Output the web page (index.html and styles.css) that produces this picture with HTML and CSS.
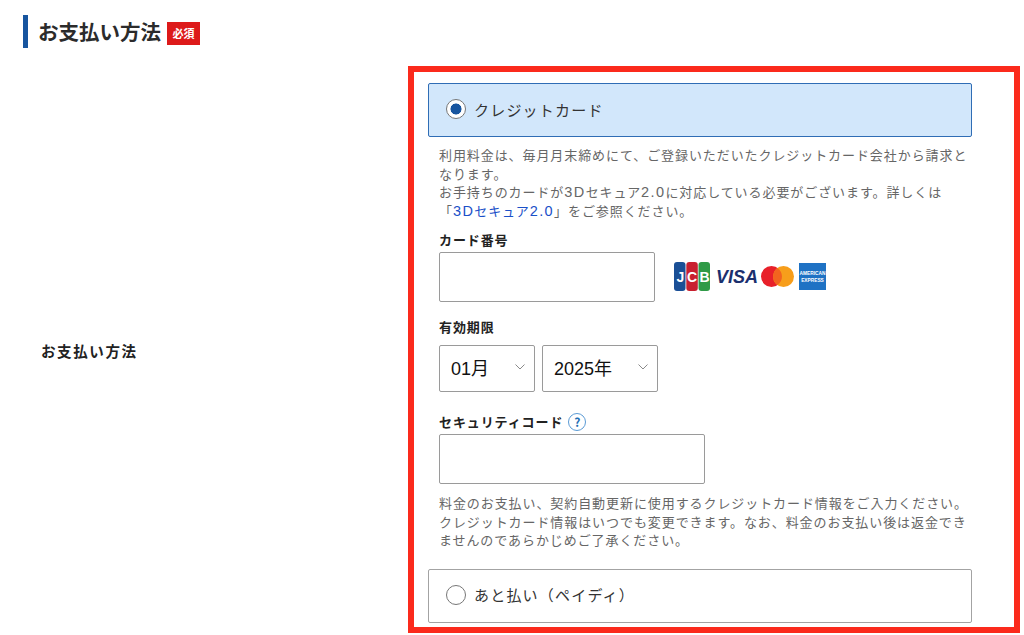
FILE: index.html
```html
<!DOCTYPE html>
<html lang="ja">
<head>
    <meta charset="UTF-8">
    <title>お支払い方法</title>
    <link rel="stylesheet" href="styles.css">
</head>
<body>
    <div class="section-head">
        <h2 class="section-title">お支払い方法</h2>
        <span class="required">必須</span>
    </div>
    <div class="form-row">
        <div class="row-label">お支払い方法</div>
        <div class="payment-box">
            <label class="method method-active">
                <span class="radio radio-on"></span>
                クレジットカード
            </label>
            <div class="card-form">
                <p class="note">利用料金は、毎月月末締めにて、ご登録いただいたクレジットカード会社から請求となります。<br>お手持ちのカードが<span class="latin">3D</span>セキュア<span class="latin">2.0</span>に対応している必要がございます。詳しくは<br>「<a class="link" href="#"><span class="latin">3D</span>セキュア<span class="latin">2.0</span></a>」をご参照ください。</p>
                <div class="field-label label-number">カード番号</div>
                <div class="number-row">
                    <div class="input input-number"></div>
                    <div class="brands">
                        <svg class="brand-jcb" width="36" height="29" viewBox="0 0 36 29">
                            <rect x="0" y="0" width="11.5" height="29" rx="3" fill="#1a4f96"/>
                            <rect x="12.300" y="0" width="11.5" height="29" rx="3" fill="#c8202f"/>
                            <rect x="24.500" y="0" width="11.5" height="29" rx="3" fill="#2f9a47"/>
                            <text x="2.500" y="20" class="jcb-text">J</text>
                            <text x="13" y="20" class="jcb-text">C</text>
                            <text x="25.500" y="20" class="jcb-text">B</text>
                        </svg>
                        <svg class="brand-visa" width="42" height="29" viewBox="0 0 42 29">
                            <text x="0" y="21" class="visa-text">VISA</text>
                        </svg>
                        <svg class="brand-mc" width="33" height="29" viewBox="0 0 33 29">
                            <circle cx="10.5" cy="14.5" r="10.5" fill="#e8202a"/>
                            <circle cx="22.5" cy="14.5" r="10.5" fill="#f79e1b"/>
                            <path d="M16.500 5.900a10.500 10.500 0 0 1 0 17.200a10.500 10.500 0 0 1 0-17.200z" fill="#f2641f"/>
                        </svg>
                        <svg class="brand-amex" width="27" height="27" viewBox="0 0 27 27">
                            <rect width="27" height="27" fill="#1f72c4"/>
                            <text x="13.500" y="12" class="amex-text">AMERICAN</text>
                            <text x="13.500" y="19" class="amex-text">EXPRESS</text>
                        </svg>
                    </div>
                </div>
                <div class="field-label label-expiry">有効期限</div>
                <div class="select-row">
                    <div class="select select-month">01月<svg class="chevron" width="10" height="6" viewBox="0 0 10 6"><path d="M.5.5 5 5 9.500.5" fill="none" stroke="#8a8a8a"/></svg></div>
                    <div class="select select-year">2025年<svg class="chevron" width="10" height="6" viewBox="0 0 10 6"><path d="M.5.5 5 5 9.500.5" fill="none" stroke="#8a8a8a"/></svg></div>
                </div>
                <div class="field-label label-code">セキュリティコード <span class="help">?</span></div>
                <div class="input input-code"></div>
                <p class="note note-bottom">料金のお支払い、契約自動更新に使用するクレジットカード情報をご入力ください。<br>クレジットカード情報はいつでも変更できます。なお、料金のお支払い後は返金できませんのであらかじめご了承ください。</p>
            </div>
            <label class="method">
                <span class="radio"></span>
                あと払い（ペイディ）
            </label>
        </div>
    </div>
</body>
</html>
```

FILE: styles.css
```css
* {
    margin: 0;
    padding: 0;
    box-sizing: border-box;
}
body {
    font-family: "Noto Sans CJK JP", "Noto Sans", sans-serif;
    background: #fff;
    color: #333;
    width: 1024px;
    height: 635px;
    overflow: hidden;
}
.section-head {
    display: flex;
    align-items: center;
    height: 33px;
    margin: 15px 0 18px 23px;
    padding-left: 10px;
    border-left: 5px solid #17559f;
}
.section-title {
    font-size: 20.5px;
    font-weight: 700;
    line-height: 33px;
    color: #2b2b2b;
}
.required {
    margin-left: 6px;
    width: 33px;
    height: 23px;
    line-height: 23px;
    margin-top: 3px;
    text-align: center;
    background: #dd1a1a;
    color: #fff;
    font-size: 11px;
    font-weight: 700;
}
.form-row {
    display: grid;
    grid-template-columns: 408px 612px;
    align-items: center;
}
.row-label {
    padding: 2px 0 0 41px;
    font-size: 14.5px;
    font-weight: 700;
    letter-spacing: 1.6px;
    color: #222;
}
.payment-box {
    height: 567px;
    border: 6px solid #fb2a1c;
    padding: 11px 42px 4px 14px;
}
.method {
    display: flex;
    align-items: center;
    gap: 8px;
    height: 54px;
    padding: 0 0 2px 17px;
    border: 1px solid #a3a3a3;
    border-radius: 2px;
    font-size: 15px;
    letter-spacing: 1.2px;
    color: #333;
}
.method-active {
    background: #d2e7fb;
    border-color: #2f6db5;
}
.radio {
    width: 20px;
    height: 20px;
    border: 1.5px solid #777;
    border-radius: 50%;
    background: #fff;
}
.radio-on {
    background: radial-gradient(circle, #17559f 0 5.2px, #fff 5.8px);
}
.card-form {
    padding: 9px 0 0 11px;
}
.note {
    font-size: 13px;
    line-height: 18.7px;
    letter-spacing: 0.92px;
    color: #666;
}
.latin {
    font-family: "Liberation Sans", sans-serif;
    font-size: 14.5px;
    line-height: 1;
    letter-spacing: 1.4px;
}
.link {
    color: #1a50c8;
    text-decoration: none;
}
.field-label {
    font-size: 13px;
    font-weight: 700;
    line-height: 18px;
    letter-spacing: 0.9px;
    color: #222;
}
.label-number {
    margin-top: 10px;
}
.label-expiry {
    margin-top: 16px;
}
.label-code {
    margin-top: 21px;
    display: flex;
    align-items: center;
    gap: 5px;
}
.number-row {
    display: flex;
    align-items: center;
    margin-top: 3px;
}
.input {
    height: 50px;
    border: 1px solid #9a9a9a;
    border-radius: 2px;
    background: #fff;
}
.input-number {
    width: 216px;
}
.input-code {
    width: 266px;
    margin-top: 3px;
}
.brands {
    display: flex;
    align-items: center;
    margin-left: 19px;
}
.brand-visa {
    margin-left: 6px;
}
.brand-mc {
    margin-left: 3px;
}
.brand-amex {
    margin-left: 5px;
}
.jcb-text {
    font-family: "Liberation Sans", sans-serif;
    font-size: 14px;
    font-weight: 700;
    fill: #fff;
}
.visa-text {
    font-family: "Liberation Sans", sans-serif;
    font-size: 18px;
    font-weight: 700;
    font-style: italic;
    fill: #1b2f6e;
}
.amex-text {
    font-family: "Liberation Sans", sans-serif;
    font-size: 4.800px;
    font-weight: 700;
    text-anchor: middle;
    fill: #fff;
}
.select-row {
    display: flex;
    gap: 7px;
    margin-top: 9px;
}
.select {
    display: flex;
    align-items: center;
    justify-content: space-between;
    height: 47px;
    padding: 0 9px 2px 11px;
    border: 1px solid #9a9a9a;
    border-radius: 2px;
    font-family: "Liberation Sans", "Noto Sans CJK JP", sans-serif;
    font-size: 18px;
    color: #111;
}
.select-month {
    width: 96px;
}
.select-year {
    width: 116px;
}
.help {
    display: inline-block;
    width: 18px;
    height: 18px;
    line-height: 15px;
    text-align: center;
    border: 1.5px solid #5b9bd5;
    border-radius: 50%;
    color: #1f6fb5;
    font-size: 12px;
    font-weight: 700;
    letter-spacing: 0;
}
.note-bottom {
    margin-top: 10px;
    margin-bottom: 19px;
}
```
